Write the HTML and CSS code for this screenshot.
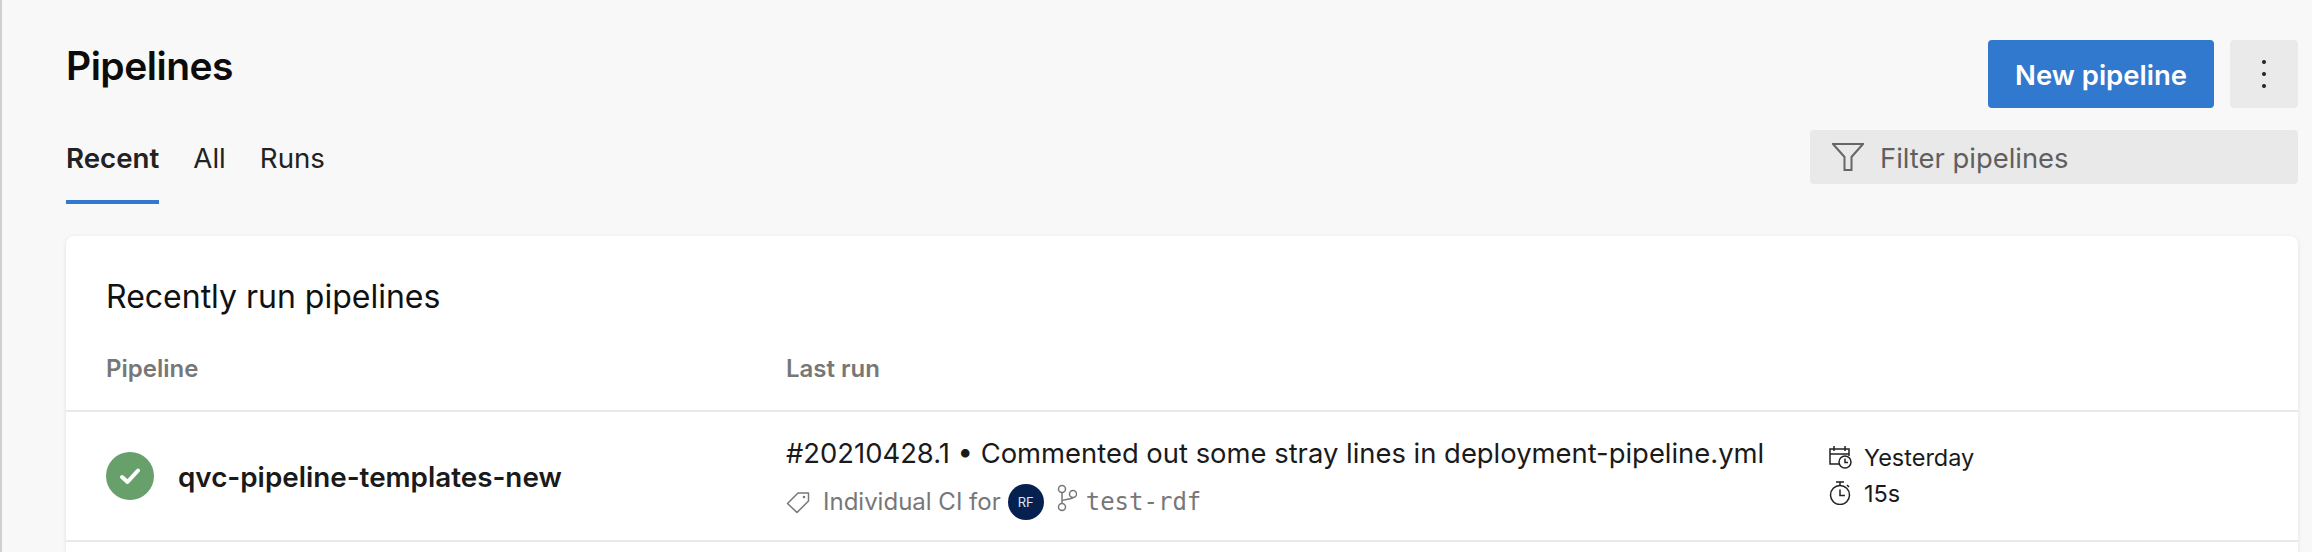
FILE: index.html
```html
<!DOCTYPE html>
<html lang="en">
<head>
  <meta charset="UTF-8">
  <title>Pipelines</title>
  <link rel="stylesheet" href="styles.css">
</head>
<body>
<div class="page">
  <div class="page-head">
    <h1 class="page-title">Pipelines</h1>
    <div class="actions">
      <button class="btn-primary">New pipeline</button>
      <button class="btn-more" aria-label="More">
        <span class="dot"></span><span class="dot"></span><span class="dot"></span>
      </button>
    </div>
  </div>

  <div class="tab-row">
    <div class="tabs">
      <div class="tab tab-active">Recent</div>
      <div class="tab">All</div>
      <div class="tab">Runs</div>
    </div>
    <div class="filter">
      <svg class="filter-icon" viewBox="0 0 32 28" width="32" height="28">
        <path d="M1 1H31L19.5 14V27H12.500V14Z" fill="none" stroke="#666" stroke-width="2"/>
      </svg>
      <span>Filter pipelines</span>
    </div>
  </div>

  <div class="card">
    <h2 class="card-title">Recently run pipelines</h2>
    <div class="table-head">
      <div>Pipeline</div>
      <div>Last run</div>
    </div>
    <!-- pipeline row -->
    <div class="row">
      <div class="row-name">
        <svg class="status" viewBox="0 0 48 48" width="48" height="48">
          <circle cx="24" cy="24" r="24" fill="#68a06b"/>
          <path d="M16 25L21.500 30L32 18.500" fill="none" stroke="#fff" stroke-width="4" stroke-linecap="round" stroke-linejoin="round"/>
        </svg>
        <span>qvc-pipeline-templates-new</span>
      </div>
      <div class="row-run">
        <div class="run-title">#20210428.1 • Commented out some stray lines in deployment-pipeline.yml</div>
        <div class="run-sub">
          <svg class="tag-icon" viewBox="0 0 24 24" width="24" height="24">
            <path d="M1.500 13.500L12 3H22.500V11L11 22.500Z" fill="none" stroke="#777" stroke-width="1.500" stroke-linejoin="round"/>
            <circle cx="18" cy="7" r="1.300" fill="#777"/>
          </svg>
          <span>Individual CI for</span>
          <span class="avatar">RF</span>
          <svg class="branch-icon" viewBox="0 0 20 28" width="20" height="28">
            <g fill="none" stroke="#777" stroke-width="1.500">
              <circle cx="5" cy="5" r="3.500"/>
              <circle cx="5" cy="23" r="3.500"/>
              <circle cx="16" cy="10" r="3.500"/>
              <path d="M5 8.500V19.500M5 17C5 15 14 16 16 13.500"/>
            </g>
          </svg>
          <span class="branch">test-rdf</span>
        </div>
      </div>
      <div class="row-time">
        <div class="time-line">
          <svg viewBox="0 0 24 24" width="24" height="24">
            <g fill="none" stroke="#222" stroke-width="1.500">
              <path d="M11 19H2V4H21V11M2 9H21M6 1V6M17 1V6"/>
              <circle cx="17" cy="17" r="6" fill="#fff"/>
              <path d="M17 13.500V17.500H20"/>
            </g>
          </svg>
          <span>Yesterday</span>
        </div>
        <div class="time-line">
          <svg viewBox="0 0 24 24" width="24" height="24">
            <g fill="none" stroke="#222" stroke-width="1.500">
              <circle cx="12" cy="14" r="9.500"/>
              <path d="M8 1H16M12 1V4.500M19 4L21 6M12 8.500V14.500H17"/>
            </g>
          </svg>
          <span>15s</span>
        </div>
      </div>
    </div>
  </div>
</div>
</body>
</html>
```

FILE: styles.css
```css
html, body {
  margin: 0;
  padding: 0;
  height: 100%;
  overflow: hidden;
}
body {
  background: #f8f8f8;
  color: #1a1a1a;
  font-family: Inter, "Noto Sans", sans-serif;
  border-left: 2px solid #d0d0d0;
}
.page {
  padding: 40px 14px 0 64px;
}
.page-head {
  display: flex;
  justify-content: space-between;
  align-items: flex-start;
  height: 68px;
}
.page-title {
  margin: 0;
  font-size: 39px;
  line-height: 52px;
  font-weight: 600;
  letter-spacing: -0.5px;
  color: #0c0c0c;
}
.actions {
  display: flex;
  gap: 16px;
}
.btn-primary {
  width: 226px;
  height: 68px;
  padding: 2px 0 0;
  border: none;
  border-radius: 4px;
  background: #3178cf;
  color: #fff;
  font: 600 27.500px Inter, sans-serif;
}
.btn-more {
  width: 68px;
  height: 68px;
  border: none;
  border-radius: 4px;
  background: #eaeaea;
  display: flex;
  flex-direction: column;
  align-items: center;
  justify-content: center;
  gap: 8px;
}
.dot {
  width: 4px;
  height: 4px;
  border-radius: 50%;
  background: #222;
}
.tab-row {
  display: flex;
  justify-content: space-between;
  align-items: flex-start;
  margin-top: 22px;
}
.tabs {
  display: flex;
  gap: 34px;
}
.tab {
  height: 74px;
  padding-top: 13px;
  box-sizing: border-box;
  font-size: 27.700px;
  line-height: 30px;
  color: #222;
}
.tab-active {
  font-weight: 600;
  border-bottom: 4px solid #3178cf;
}
.filter {
  width: 488px;
  height: 54px;
  box-sizing: border-box;
  padding: 2px 0 0 22px;
  display: flex;
  align-items: center;
  gap: 16px;
  background: #e9e9e9;
  border-radius: 4px;
  color: #5f5f5f;
  font-size: 27.400px;
}
.filter-icon {
  flex: none;
  margin-top: -2px;
}
.card {
  margin-top: 32px;
  background: #fff;
  border-radius: 8px 8px 0 0;
  box-shadow: 0 1px 4px rgba(0, 0, 0, 0.1);
  height: 316px;
}
.card-title {
  margin: 0;
  padding: 42px 40px 0;
  font-size: 32px;
  line-height: 38px;
  font-weight: 400;
  color: #111;
}
.table-head {
  display: grid;
  grid-template-columns: 680px 1fr;
  padding: 39px 40px 0;
  height: 55px;
  font-size: 24px;
  line-height: 28px;
  font-weight: 600;
  color: #777;
  border-bottom: 2px solid #e8e8e8;
}
.row {
  display: grid;
  grid-template-columns: 680px 1042px 1fr;
  padding: 0 40px;
  height: 128px;
  border-bottom: 2px solid #e8e8e8;
  align-items: center;
}
.row-name {
  display: flex;
  align-items: center;
  gap: 24px;
  font-size: 27.800px;
  font-weight: 600;
}
.row-name span {
  padding-top: 2px;
}
.row-run {
  padding-top: 4px;
}
.row-time {
  padding-bottom: 2px;
}
.status {
  flex: none;
}
.run-title {
  font-size: 27.400px;
  line-height: 32px;
}
.run-sub {
  display: flex;
  align-items: center;
  margin: 15px 0 0 0;
  font-size: 24px;
  color: #777;
}
.tag-icon {
  margin-right: 13px;
}
.avatar {
  width: 36px;
  height: 36px;
  margin: 0 13px 0 7px;
  border-radius: 50%;
  background: #06214f;
  color: #dfe6f0;
  font-size: 13px;
  display: flex;
  align-items: center;
  justify-content: center;
}
.branch-icon {
  margin: -8px 9px 0 0;
}
.branch {
  font-family: "DejaVu Sans Mono", monospace;
  font-size: 24px;
}
.time-line {
  display: flex;
  align-items: center;
  gap: 12px;
  height: 36px;
  font-size: 23.500px;
}
```
